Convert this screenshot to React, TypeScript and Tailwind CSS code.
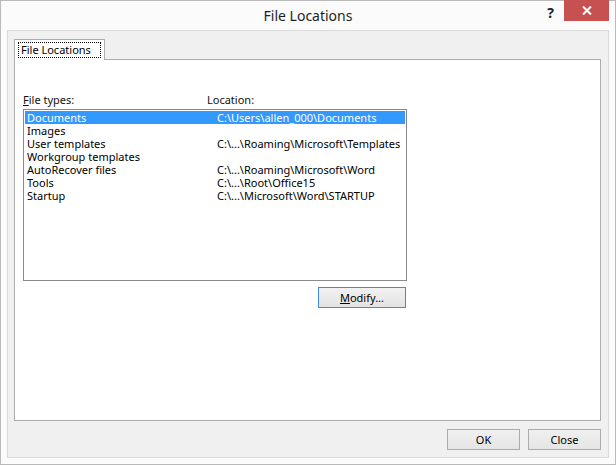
import React from "react";

const rows = [
  { type: "Documents", loc: "C:\\Users\\allen_000\\Documents", selected: true },
  { type: "Images", loc: "" },
  { type: "User templates", loc: "C:\\...\\Roaming\\Microsoft\\Templates" },
  { type: "Workgroup templates", loc: "" },
  { type: "AutoRecover files", loc: "C:\\...\\Roaming\\Microsoft\\Word" },
  { type: "Tools", loc: "C:\\...\\Root\\Office15" },
  { type: "Startup", loc: "C:\\...\\Microsoft\\Word\\STARTUP" },
];

export default function App() {
  return (
    <div
      className="w-[616px] h-[465px] bg-[#fbfbfb] border border-[#b9b9b9] flex flex-col text-[11px] text-black"
      style={{ fontFamily: '"Noto Sans", "Open Sans", sans-serif' }}
    >
      {/* Title bar */}
      <div className="h-[29px] flex items-start relative">
        <div className="flex-1 text-center text-[14px] leading-[20px] pt-[5px] text-[#1f1f1f]">
          File Locations
        </div>
        <div className="absolute right-[61px] top-[3px] text-[14px] font-bold leading-[18px] text-[#222]">
          ?
        </div>
        <div className="absolute right-[6px] top-[-1px] w-[45px] h-[21px] bg-[#c75050] flex items-center justify-center">
          <svg width="10" height="9" viewBox="0 0 10 9">
            <path d="M1 0.5 L9 8.5 M9 0.5 L1 8.5" stroke="#fff" strokeWidth="2" />
          </svg>
        </div>
      </div>

      {/* Client area */}
      <div className="mx-[6px] h-[428px] bg-[#f0f0f0] border border-[#dadada] flex flex-col pt-[8px] pl-[6px] pr-[7px]">
        {/* Tab */}
        <div className="flex">
          <div className="w-[91px] h-[21px] bg-white border border-b-0 border-[#adadad] -mb-px relative z-10 px-[3px] pt-[2px]">
            <div className="border border-dotted border-black h-[16px] leading-[14px] px-[2px]">
              File Locations
            </div>
          </div>
        </div>
        {/* Panel */}
        <div className="h-[362px] bg-white border border-[#adadad] pl-[8px] pt-[32px] flex flex-col">
          <div className="flex leading-[15px] h-[17px] text-[#111]">
            <div className="w-[184px]">
              <span className="underline">F</span>ile types:
            </div>
            <div>Location:</div>
          </div>
          <div className="w-[384px] h-[172px] border border-[#8a8a8a] p-[1px] flex flex-col">
            {rows.map((r) => (
              <div
                key={r.type}
                className={
                  "flex h-[13px] leading-[13px] px-[2px] " +
                  (r.selected ? "bg-[#3399ff] text-white" : "text-black")
                }
              >
                <div className="w-[190px] shrink-0">{r.type}</div>
                <div className="whitespace-nowrap">{r.loc}</div>
              </div>
            ))}
          </div>
          <div className="w-[384px] flex justify-end mt-[6px] pr-[1px]">
            <button className="w-[88px] h-[21px] border border-[#3c8ce6] bg-gradient-to-b from-[#f2f2f2] to-[#e3e3e3] leading-[17px]">
              <span className="underline">M</span>odify...
            </button>
          </div>
        </div>
        {/* Bottom buttons */}
        <div className="flex justify-end gap-[8px] mt-[8px]">
          <button className="w-[73px] h-[21px] border border-[#acacac] bg-gradient-to-b from-[#f0f0f0] to-[#e5e5e5] leading-[17px]">
            OK
          </button>
          <button className="w-[73px] h-[21px] border border-[#acacac] bg-gradient-to-b from-[#f0f0f0] to-[#e5e5e5] leading-[17px]">
            Close
          </button>
        </div>
      </div>
    </div>
  );
}
